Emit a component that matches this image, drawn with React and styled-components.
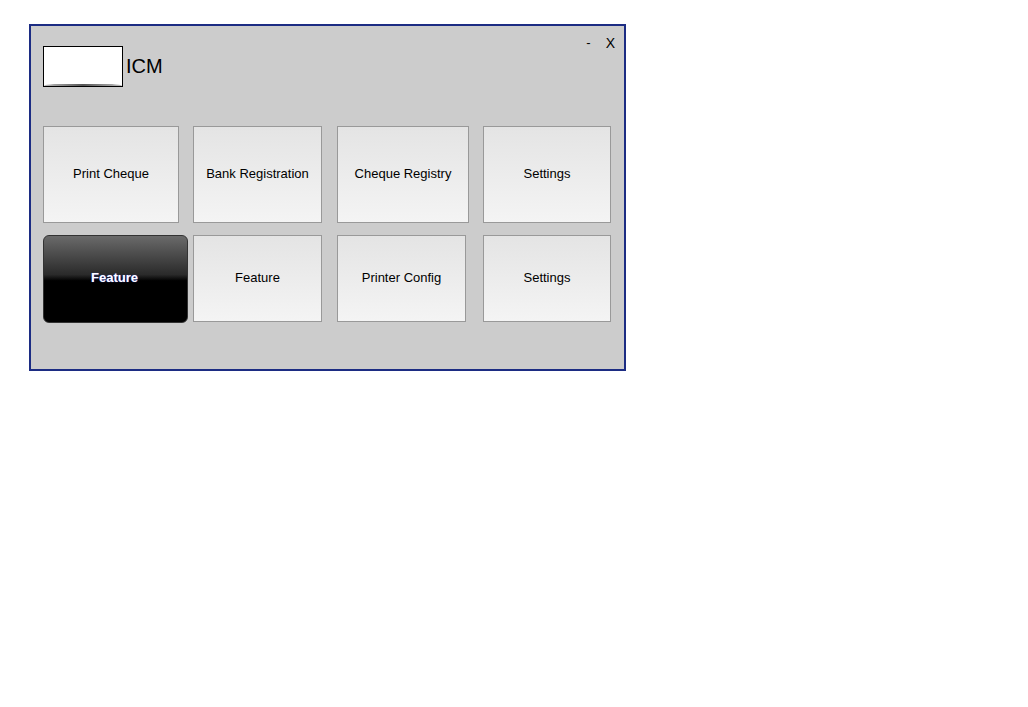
import React from 'react';
import styled, { createGlobalStyle } from 'styled-components';

const GlobalStyle = createGlobalStyle`
  body {
    margin: 0;
    background: #fff;
    font-family: 'Liberation Sans', Arial, sans-serif;
  }
`;

const Page = styled.div`
  padding: 24px 0 0 29px;
`;

const Window = styled.div`
  box-sizing: border-box;
  width: 597px;
  height: 347px;
  border: 2px solid #1c2c83;
  background: #cccccc;
  padding: 0 12px;
`;

const Header = styled.div`
  display: flex;
  justify-content: space-between;
  align-items: flex-start;
  height: 100px;
`;

const Brand = styled.div`
  display: flex;
  align-items: center;
  margin-top: 20px;
`;

const Logo = styled.div`
  position: relative;
  box-sizing: border-box;
  width: 80px;
  height: 41px;
  background: #fff;
  border: 1px solid #000;
  &::after {
    content: '';
    position: absolute;
    left: 0;
    right: 0;
    bottom: 0;
    height: 3px;
    border-radius: 50% 50% 0 0 / 100% 100% 0 0;
    background: linear-gradient(90deg, #bbb, #555 50%, #bbb);
    clip-path: inset(1px 0 0 0);
  }
`;

const Title = styled.span`
  font-size: 20px;
  color: #000;
  margin-left: 3px;
`;

const Controls = styled.div`
  display: flex;
  gap: 15px;
  padding-top: 9px;
  margin-right: -3px;
  color: #000;
`;

const Control = styled.span`
  font-size: ${(p) => p.$size || 14}px;
`;

const Row = styled.div`
  display: flex;
  margin-bottom: 12px;
`;

const Tile = styled.button`
  box-sizing: border-box;
  width: ${(p) => p.$w}px;
  height: ${(p) => p.$h}px;
  margin-left: ${(p) => p.$gap || 0}px;
  border: 1px solid #999;
  background: linear-gradient(180deg, #e4e4e4 0%, #f4f4f4 100%);
  font-family: 'Liberation Sans', Arial, sans-serif;
  font-size: 13px;
  color: #000;
  padding: 0 0 2px;
  cursor: pointer;
`;

const DarkTile = styled(Tile)`
  border: 1px solid #333;
  border-radius: 6px;
  padding: 0 2px 3px 0;
  background: linear-gradient(180deg, #6a6a6a 0%, #2a2a2a 45%, #000 52%, #000 100%);
  color: #fff;
  font-weight: bold;
  text-shadow: 0 0 1px #4050ff;
`;

const App = () => {
  return (
    <Page>
      <GlobalStyle />
      <Window>
        <Header>
          <Brand>
            <Logo />
            <Title>ICM</Title>
          </Brand>
          <Controls>
            <Control $size={13}>-</Control>
            <Control>X</Control>
          </Controls>
        </Header>
        <Row>
          <Tile $w={136} $h={97}>Print Cheque</Tile>
          <Tile $w={129} $h={97} $gap={14}>Bank Registration</Tile>
          <Tile $w={132} $h={97} $gap={15}>Cheque Registry</Tile>
          <Tile $w={128} $h={97} $gap={14}>Settings</Tile>
        </Row>
        <Row>
          <DarkTile $w={145} $h={88}>Feature</DarkTile>
          <Tile $w={129} $h={87} $gap={5}>Feature</Tile>
          <Tile $w={129} $h={87} $gap={15}>Printer Config</Tile>
          <Tile $w={128} $h={87} $gap={17}>Settings</Tile>
        </Row>
      </Window>
    </Page>
  );
};

export default App;
